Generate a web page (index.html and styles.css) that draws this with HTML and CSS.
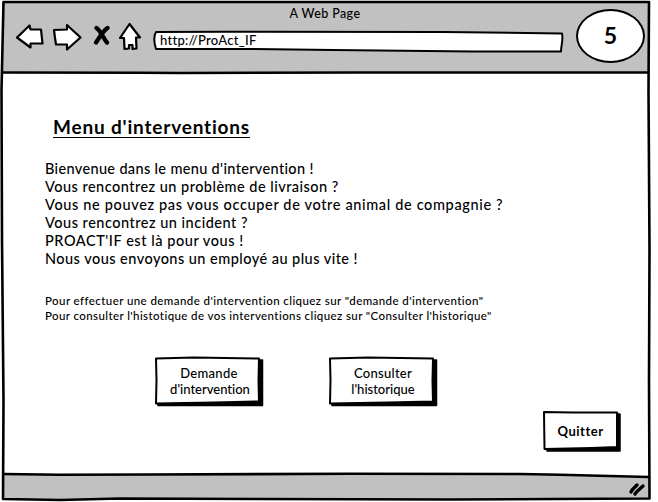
FILE: index.html
```html
<!DOCTYPE html>
<html lang="fr">
<head>
<meta charset="utf-8">
<title>A Web Page</title>
<link rel="stylesheet" href="styles.css">
</head>
<body>
<div class="window">
  <svg class="frame" viewBox="0 0 658 502" aria-hidden="true">
    <path class="grey" d="M2.500 2.500H648.500V73H2.500Z"/>
    <path class="grey" d="M3 474.500L350 474L520 474.500L649 476.500L649 499L3 499Z"/>
    <path class="edge" d="M3.500 2L649 2L648.500 90L649.500 250L649 380L649.500 498.500L450 499.500L260 499L120 498.500L60 500L3 499L3.500 400L2 240L1.500 90Z"/>
    <path class="edge" d="M3 72.500L140 72.800L180 73L360 72.500L649 72.500"/>
    <path class="edge" d="M3 474L60 474.800L150 474.500L350 473.800L520 474L560 474.800L649 477"/>
    <path class="grip" d="M631 492C632 489 635 487 637 485M635 494C637 491 641 488 643 486"/>
  </svg>

  <header class="header">
    <div class="title">A Web Page</div>
    <div class="toolbar">
      <svg class="nav" viewBox="0 0 130 34" aria-hidden="true">
        <path class="arrow" d="M2 15.500L14.500 3.500L15.500 7.500L26 7.500L27.500 21.500L15.500 21.500V25.500Z"/>
        <path class="arrow" d="M39 8L52 7.500V3L65.500 15.500L52 27.500V22.500L41 22.500L40 16Z"/>
        <path class="cross" d="M81.500 6C86 9 88 16 92 20.500M92.500 6C88 9 84 16 81 20.500"/>
        <path class="arrow" d="M114.500 2L125 15.500H121L121.500 26.500L117.500 27V23H114V26.500L109.500 27L109 16H105Z"/>
      </svg>
      <div class="address">
        <svg class="box" viewBox="0 0 411 24" aria-hidden="true"><path d="M3 2C100 1.500 200 1.500 290 2L409 3.500C410.500 10 408 15 408 21.500L320 21.500L180 20L100 19L3 19C.5 12 1 5 3 2Z"/></svg>
        <span>http://ProAct_IF</span>
      </div>
    </div>
    <div class="badge">5</div>
  </header>

  <main class="content">
    <h1><span>Menu d'interventions</span></h1>
    <div class="intro">
      <p class="welcome">Bienvenue dans le menu d'intervention !</p>
      <p class="delivery">Vous rencontrez un problème de livraison ?</p>
      <p class="animal">Vous ne pouvez pas vous occuper de votre animal de compagnie ?</p>
      <p class="incident">Vous rencontrez un incident ?</p>
      <p class="brand">PROACT'IF est là pour vous !</p>
      <p class="staff">Nous vous envoyons un employé au plus vite !</p>
    </div>
    <div class="help">
      <p>Pour effectuer une demande d'intervention cliquez sur "demande d'intervention"</p>
      <p class="history">Pour consulter l'histotique de vos interventions cliquez sur "Consulter l'historique"</p>
    </div>
    <div class="actions">
      <button class="btn">
        <svg class="box" viewBox="0 0 110 52" aria-hidden="true"><path class="shade" d="M4 46V49.500H108.500V4H104Z"/><path d="M2 2.500L40 1.500L105 2.500L104.500 25L105 45.500L60 46.500L2 47.500L2.500 24Z"/></svg>
        <span class="wide">Demande</span><span class="second">d'intervention</span>
      </button>
      <button class="btn">
        <svg class="box" viewBox="0 0 110 52" aria-hidden="true"><path class="shade" d="M4 46V49.500H108.500V4H104Z"/><path d="M2 2.500L40 1.500L105 2.500L104.500 25L105 45.500L60 46.500L2 47.500L2.500 24Z"/></svg>
        <span class="wide">Consulter</span><span>l'historique</span>
      </button>
    </div>
    <button class="btn quit">
      <svg class="box" viewBox="0 0 80 43" aria-hidden="true"><path class="shade" d="M5 37V41H78V4H74Z"/><path d="M2 2L30 2.500L75 2.500L75 37L50 38L2.500 39Z"/></svg>
      <span>Quitter</span>
    </button>
  </main>
</div>
</body>
</html>
```
FILE: styles.css
```css
* { box-sizing: border-box; }
body { margin: 0; background: #fff; color: #000; font-family: Lato, "Open Sans", sans-serif; font-weight: 500; }
p { margin: 0; }
.window { position: relative; width: 658px; height: 502px; overflow: hidden; white-space: nowrap; font-variant-ligatures: none; }
.frame { position: absolute; inset: 0; width: 658px; height: 502px; }
.grey { fill: #c1c1c1; }
.edge { fill: none; stroke: #000; stroke-width: 2.6; stroke-linejoin: round; }
.grip { fill: none; stroke: #000; stroke-width: 3.4; stroke-linecap: round; }

.header { position: relative; height: 74px; }
.title { width: 650px; padding-top: 6px; text-align: center; font-size: 12.5px; line-height: 16px; letter-spacing: .4px; }
.toolbar { display: flex; padding-left: 15px; }
.nav { width: 130px; height: 34px; margin-right: 8px; }
.arrow { fill: #fff; stroke: #000; stroke-width: 2.2; stroke-linejoin: round; }
.cross { fill: none; stroke: #000; stroke-width: 4.4; stroke-linecap: round; }
.address { position: relative; width: 411px; height: 24px; margin-top: 8px; padding-left: 7px; font-size: 13px; line-height: 21px; letter-spacing: .27px; }
.box { position: absolute; inset: 0; width: 100%; height: 100%; fill: #fff; stroke: #000; stroke-width: 2; stroke-linejoin: round; }
.box .shade { fill: #000; stroke-width: 1.5; }
.address span, .btn span { position: relative; }
.badge { position: absolute; left: 576px; top: 9px; width: 69px; height: 54px; border: 2px solid #000; border-radius: 50%; background: #fff; font-size: 23px; font-weight: 700; line-height: 49px; text-align: center; }

.content { position: relative; display: flex; flex-direction: column; padding: 42px 0 0 45px; }
h1 { margin: 0 0 22px 8px; font-size: 19px; line-height: 22px; letter-spacing: .82px; }
h1 span { display: inline-block; height: 22px; border-bottom: 1px solid #000; }
.intro { font-size: 14.5px; line-height: 18px; }
.welcome { letter-spacing: .34px; }
.delivery { letter-spacing: .47px; }
.animal { letter-spacing: .65px; }
.incident { letter-spacing: .5px; }
.brand { letter-spacing: .55px; }
.staff { letter-spacing: .46px; }
.help { margin-top: 25px; font-size: 11.5px; line-height: 15px; letter-spacing: .42px; }
.history { letter-spacing: .4px; }
.actions { display: flex; gap: 64px; margin: 33px 0 0 109px; }
.btn { position: relative; display: flex; flex-direction: column; align-items: center; width: 110px; height: 52px; padding: 9px 0 0; border: 0; background: none; color: #000; font: 500 13px/16px Lato, sans-serif; font-variant-ligatures: none; }
.btn .wide { letter-spacing: .3px; }
.btn .second { padding-left: 2px; }
.quit { align-self: flex-start; width: 80px; height: 43px; margin: 2px 0 0 497px; padding: 13px 3px 0 0; font-weight: 700; letter-spacing: .5px; }
```
